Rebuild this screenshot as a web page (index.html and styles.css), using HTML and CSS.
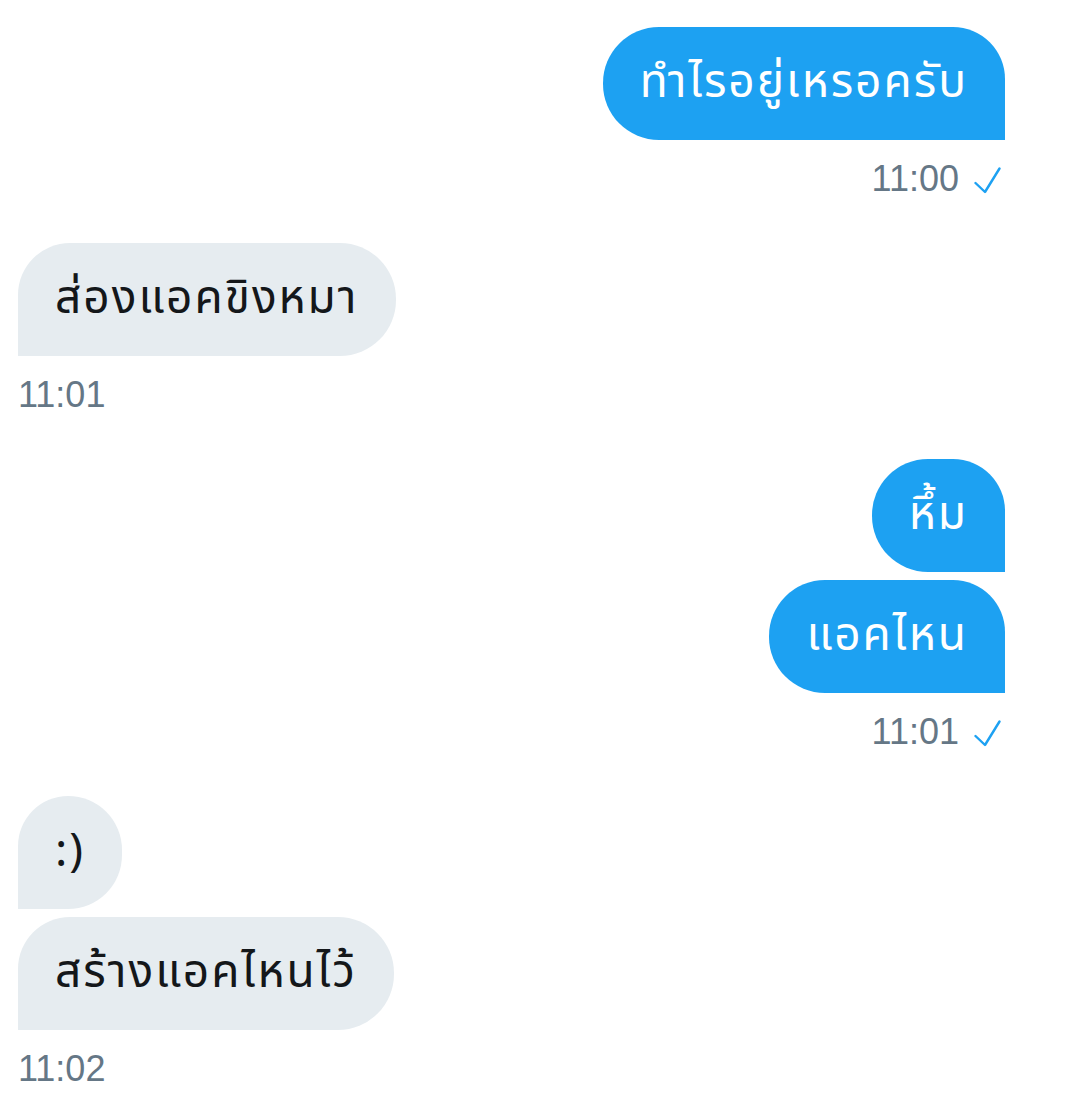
FILE: index.html
```html
<!DOCTYPE html>
<html lang="th">
<head>
<meta charset="utf-8">
<link rel="stylesheet" href="styles.css">
</head>
<body>
<div class="chat">
  <div class="group out">
    <div class="bubble out-single">ทำไรอยู่เหรอครับ</div>
    <div class="meta"><span class="time">11:00</span><svg class="check" viewBox="0 0 27 27" width="27" height="27"><path d="M1.5 16 L11 25 L25.5 1.5" fill="none" stroke="#1DA1F2" stroke-width="2.4" stroke-linecap="round" stroke-linejoin="round"/></svg></div>
  </div>
  <div class="group in">
    <div class="bubble in-single">ส่องแอคขิงหมา</div>
    <div class="meta"><span class="time">11:01</span></div>
  </div>
  <div class="group out">
    <div class="bubble out-single">หึ้ม</div>
    <div class="bubble out-single">แอคไหน</div>
    <div class="meta"><span class="time">11:01</span><svg class="check" viewBox="0 0 27 27" width="27" height="27"><path d="M1.5 16 L11 25 L25.5 1.5" fill="none" stroke="#1DA1F2" stroke-width="2.4" stroke-linecap="round" stroke-linejoin="round"/></svg></div>
  </div>
  <div class="group in">
    <div class="bubble in-single">:)</div>
    <div class="bubble in-single">สร้างแอคไหนไว้</div>
    <div class="meta"><span class="time">11:02</span></div>
  </div>
</div>
</body>
</html>
```
FILE: styles.css
```css
html, body {
  margin: 0;
  padding: 0;
  background: #ffffff;
}
body {
  font-family: "Noto Sans Thai", "Noto Sans", "Liberation Sans", sans-serif;
}
.chat {
  display: flex;
  flex-direction: column;
  gap: 44px;
  padding: 27px 61px 0 18px;
}
.group {
  display: flex;
  flex-direction: column;
  gap: 8px;
}
.group.out {
  align-items: flex-end;
}
.group.in {
  align-items: flex-start;
}
.bubble {
  font-size: 46px;
  letter-spacing: 2px;
  line-height: 53px;
  padding: 30px 37px;
  white-space: nowrap;
}
.out-single {
  background: #1DA1F2;
  color: #ffffff;
  border-radius: 56px 52px 0 56px;
}
.in-single {
  background: #E6ECF0;
  color: #14171A;
  border-radius: 52px 56px 56px 0;
}
.meta {
  display: flex;
  align-items: center;
  gap: 15px;
  margin-top: 11px;
  height: 40px;
}
.time {
  font-family: "Liberation Sans", "Helvetica", sans-serif;
  font-size: 36px;
  line-height: 40px;
  color: #657786;
}
.check {
  display: block;
  margin-right: 4px;
  margin-top: 2px;
}
```
